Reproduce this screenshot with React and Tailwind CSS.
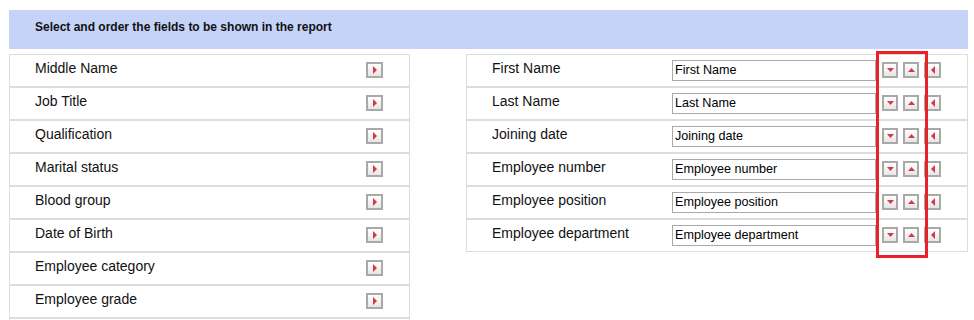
import React from "react";

const available = [
  "Middle Name",
  "Job Title",
  "Qualification",
  "Marital status",
  "Blood group",
  "Date of Birth",
  "Employee category",
  "Employee grade",
];

const selected = [
  "First Name",
  "Last Name",
  "Joining date",
  "Employee number",
  "Employee position",
  "Employee department",
];

const Arrow = ({ dir }) => {
  const pts = {
    right: "0,0 4,4 0,8",
    left: "4,0 0,4 4,8",
    down: "0,0 7,0 3.5,4",
    up: "3.5,0 7,4 0,4",
  }[dir];
  const size = dir === "left" || dir === "right" ? { w: 4, h: 8 } : { w: 7, h: 4 };
  return (
    <svg width={size.w} height={size.h} viewBox={`0 0 ${size.w} ${size.h}`} className="block">
      <polygon points={pts} fill="#d6393f" />
    </svg>
  );
};

const IconButton = ({ dir, className = "" }) => (
  <button
    type="button"
    className={`h-[16px] border-2 border-[#a9a9a9] bg-gradient-to-b from-white to-[#e6e6e6] flex items-center p-0 ${className}`}
  >
    <Arrow dir={dir} />
  </button>
);

export default function App() {
  return (
    <div
      className="w-[974px] h-[320px] overflow-hidden bg-white pt-[10px] pl-[9px] text-[#111]"
      style={{ fontFamily: '"Liberation Sans", Arial, sans-serif' }}
    >
      <div className="w-[959px] h-[39px] bg-[#c5d3f8] pl-[26px] pt-[10px] text-[12px] leading-[14px] font-bold">
        Select and order the fields to be shown in the report
      </div>

      <div className="flex items-start gap-[56px] mt-[5px]">
        {/* available fields */}
        <div className="w-[401px] flex flex-col shrink-0">
          {available.map((f) => (
            <div key={f} className="h-[33px] shrink-0 border border-[#dddddd] flex items-start pl-[25px] pr-[26px] pt-[5px]">
              <span className="text-[14px] leading-[16px]">{f}</span>
              <IconButton dir="right" className="ml-auto mt-[2px] w-[17px] justify-start pl-[5px]" />
            </div>
          ))}
          <div className="h-[4px] shrink-0 border-x border-t border-[#dddddd]" />
        </div>

        {/* selected fields */}
        <div className="relative w-[502px] flex flex-col shrink-0">
          {selected.map((f) => (
            <div key={f} className="h-[33px] border border-[#dddddd] flex items-start pl-[25px] pt-[5px]">
              <span className="w-[180px] text-[14px] leading-[16px]">{f}</span>
              <div className="w-[204px] h-[21px] border border-[#a9a9a9] pl-[2px] text-[12.6px] leading-[19px] text-black">
                {f}
              </div>
              <IconButton dir="down" className="ml-[6px] mt-[2px] w-[16px] justify-center" />
              <IconButton dir="up" className="ml-[5px] mt-[2px] w-[16px] justify-center" />
              <IconButton dir="left" className="ml-[5px] mt-[2px] w-[17px] justify-start pl-[5px]" />
            </div>
          ))}
          <div className="absolute left-[410px] top-[-3px] w-[52px] h-[207px] border-[3px] border-[#e8212b] pointer-events-none" />
        </div>
      </div>
    </div>
  );
}
